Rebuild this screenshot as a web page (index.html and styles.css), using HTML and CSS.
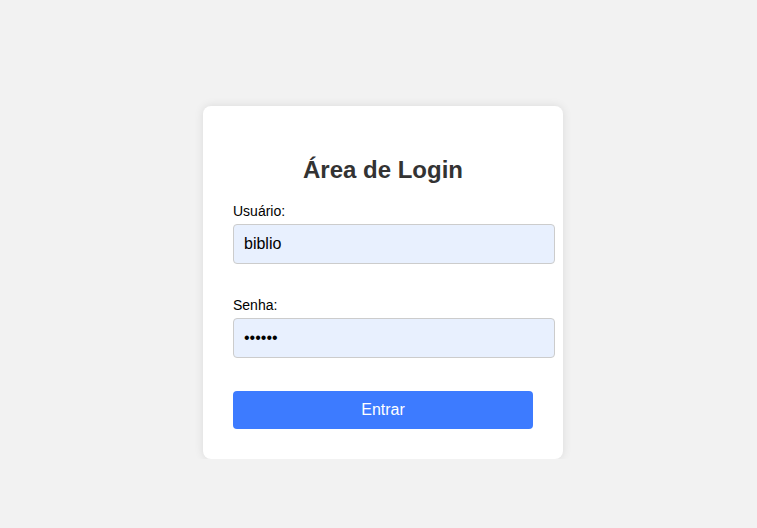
FILE: index.html
```html
<!DOCTYPE html>
<html lang="pt-BR">
<head>
<meta charset="utf-8">
<title>Login</title>
<link rel="stylesheet" href="styles.css">
</head>
<body>
<div class="page">
  <div class="card">
    <h2 class="title">Área de Login</h2>
    <form class="form">
      <div class="group">
        <label class="label" for="u">Usuário:</label>
        <input class="input" id="u" type="text" value="biblio">
      </div>
      <div class="group">
        <label class="label" for="p">Senha:</label>
        <input class="input" id="p" type="password" value="biblio">
      </div>
      <button class="btn" type="button">Entrar</button>
    </form>
  </div>
</div>
</body>
</html>
```
FILE: styles.css
```css
html, body {
  margin: 0;
  padding: 0;
  background: #f2f2f2;
  font-family: "Liberation Sans", Arial, sans-serif;
}
.page {
  display: flex;
  justify-content: center;
  padding-top: 106px;
  padding-left: 9px;
}
.card {
  width: 300px;
  padding: 30px;
  background: #fff;
  border-radius: 8px;
  box-shadow: 0 0 10px rgba(0, 0, 0, 0.1);
}
.title {
  margin: 20px 0 20px;
  text-align: center;
  font-size: 24px;
  line-height: 28px;
  font-weight: bold;
  color: #333;
}
.form {
  display: flex;
  flex-direction: column;
}
.group {
  display: flex;
  flex-direction: column;
  margin-bottom: 34px;
}
.group + .group {
  margin-bottom: 33px;
}
.label {
  font-size: 14px;
  line-height: 15px;
  color: #000;
  margin-bottom: 5px;
}
.input {
  width: 300px;
  padding: 10px;
  font-family: "Liberation Sans", Arial, sans-serif;
  font-size: 16px;
  line-height: 18px;
  height: 18px;
  border: 1px solid #ccc;
  border-radius: 4px;
  background: #e8f0fe;
  color: #000;
  outline: none;
}
.btn {
  width: 300px;
  height: 38px;
  border: none;
  border-radius: 4px;
  background: #3d7bff;
  color: #fff;
  font-family: "Liberation Sans", Arial, sans-serif;
  font-size: 16px;
  padding: 0;
}
```
